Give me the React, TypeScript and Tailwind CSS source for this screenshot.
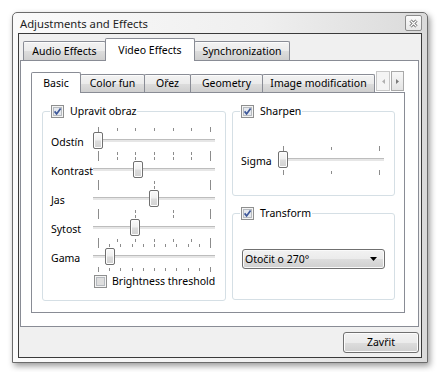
import React from "react";

const tabBase =
  "flex items-center justify-center whitespace-nowrap border-t border-l border-r border-[#898c95] rounded-t-[2px]";
const tabIdle =
  "bg-[linear-gradient(to_bottom,#f3f3f3_0%,#ebebeb_50%,#dddddd_51%,#cfcfcf_100%)] shadow-[inset_0_1px_0_#fcfcfc]";

function CheckBox({ checked }: { checked: boolean }) {
  return (
    <svg width="13" height="13" viewBox="0 0 13 13" className="block shrink-0">
      <rect x="0.5" y="0.5" width="12" height="12" fill="#f4f4f4" stroke="#8e8f8f" />
      <rect x="2.5" y="2.5" width="8" height="8" fill={checked ? "#e6e9ee" : "#dedede"} stroke="#b7bbc0" />
      {checked && (
        <path d="M3.6 6.4 L5.6 8.9 L9.6 3.4" fill="none" stroke="#3d5799" strokeWidth="1.7" />
      )}
    </svg>
  );
}

function Ticks({ count, width }: { count: number; width: number }) {
  const span = width - 10;
  return (
    <svg width={width} height="5" className="block">
      {Array.from({ length: count }).map((_, i) => {
        const x = Math.round(5 + (span * i) / (count - 1)) + 0.5;
        const end = i === 0 || i === count - 1;
        return (
          <line key={i} x1={x} x2={x} y1={end ? 0 : 1} y2={end ? 5 : 4} stroke="#8c8c8c" />
        );
      })}
    </svg>
  );
}

function Slider({
  width,
  widthClass,
  value,
  above,
  below,
}: {
  width: number;
  widthClass: string;
  value: number;
  above: number;
  below: number;
}) {
  const left = Math.round(value * (width - 10));
  return (
    <div className={`flex flex-col h-[29px] shrink-0 ${widthClass}`}>
      <Ticks count={above} width={width} />
      <div className="relative h-[17px]">
        <div className="mt-[7px] h-[3px] bg-[#e6e6e6] border-t border-[#bdbdbd]" />
        <div
          className="absolute top-0 w-[10px] h-[17px] rounded-[2px] border border-[#707070] bg-[linear-gradient(to_bottom,#fbfbfb_0%,#f0f0f0_45%,#dcdcdc_55%,#d2d2d2_100%)] shadow-[inset_0_0_0_1px_#fdfdfd]"
          style={{ left }}
        />
      </div>
      <div className="h-[2px]" />
      <Ticks count={below} width={width} />
    </div>
  );
}

export default function App() {
  const rows = [
    { label: "Odstín", value: 0, above: 7, below: 7 },
    { label: "Kontrast", value: 0.36, above: 7, below: 3 },
    { label: "Jas", value: 0.5, above: 3, below: 4 },
    { label: "Sytost", value: 0.33, above: 4, below: 7 },
    { label: "Gama", value: 0.11, above: 11, below: 11 },
  ];

  const innerTabs = [
    { name: "Color fun", w: "w-[65px]" },
    { name: "Ořez", w: "w-[47px]" },
    { name: "Geometry", w: "w-[73px]" },
    { name: "Image modification", w: "w-[113px]" },
  ];

  return (
    <div className="w-[440px] h-[372px] bg-white pt-[12px] pl-[12px] font-['Noto_Sans',sans-serif] text-[10.5px] leading-[13px] text-black">
      <div className="w-[416px] h-[351px] flex flex-col border border-[#6b6b6b] rounded-t-[5px] px-[5px] pb-[4px] bg-[linear-gradient(to_right,#fafafa_0%,#efefef_60%,#dadada_100%)] shadow-[2px_3px_6px_rgba(0,0,0,0.4)]">
        {/* Title bar */}
        <div className="h-[20px] flex items-center justify-between">
          <span className="pl-[2px] text-[11.25px] text-[#1e1e1e]">Adjustments and Effects</span>
          <div className="w-[17px] h-[16px] flex items-center justify-center border border-[#8c8c8c] rounded-[2px] bg-[linear-gradient(to_bottom,#fbfbfb,#e8e8e8)]">
            <svg width="9" height="9" viewBox="0 0 9 9">
              <path d="M1.5 1.5 L7.5 7.5 M7.5 1.5 L1.5 7.5" stroke="#6a6a6a" strokeWidth="3" />
              <path d="M1.5 1.5 L7.5 7.5 M7.5 1.5 L1.5 7.5" stroke="#ffffff" strokeWidth="1.2" />
            </svg>
          </div>
        </div>

        {/* Client area */}
        <div className="flex-1 flex flex-col border border-[#3a3a3a] bg-[#f0f0f0] pt-[4px] pb-[4px]">
          <div className="flex items-end h-[22px] ml-[4px]">
            <div className={`${tabBase} ${tabIdle} w-[83px] h-[19px]`}>Audio Effects</div>
            <div className={`${tabBase} relative z-10 -ml-px -mb-px w-[90px] h-[23px] bg-white`}>
              Video Effects
            </div>
            <div className={`${tabBase} ${tabIdle} -ml-px w-[96px] h-[19px]`}>Synchronization</div>
          </div>

          <div className="ml-[1px] w-[399px] h-[267px] border border-[#898c95] bg-white pt-[11px] pl-[10px]">
            <div className="flex items-end h-[20px]">
              <div className={`${tabBase} relative z-10 -mb-px w-[50px] h-[21px] bg-white`}>Basic</div>
              {innerTabs.map((t) => (
                <div key={t.name} className={`${tabBase} ${tabIdle} -ml-px ${t.w} h-[18px]`}>
                  {t.name}
                </div>
              ))}
              <div className="flex gap-[1px] ml-[1px] mb-[1px]">
                <div className="w-[14px] h-[20px] flex items-center justify-center border border-[#c8c8c8] bg-[#f4f4f4]">
                  <svg width="3" height="5" viewBox="0 0 3 5">
                    <path d="M3 0 L0 2.5 L3 5 Z" fill="#b0b0b0" />
                  </svg>
                </div>
                <div className="w-[13px] h-[20px] flex items-center justify-center border border-[#a9a9a9] bg-[linear-gradient(to_bottom,#f7f7f7,#e4e4e4)]">
                  <svg width="3" height="5" viewBox="0 0 3 5">
                    <path d="M0 0 L3 2.5 L0 5 Z" fill="#7a7a7a" />
                  </svg>
                </div>
              </div>
            </div>

            <div className="w-[374px] h-[221px] border border-[#898c95] bg-white flex gap-[6px] pt-[12px] pl-[10px]">
              {/* Upravit obraz */}
              <fieldset className="w-[184px] self-start border border-[#d5dfe5] rounded-[3px]">
                <legend className="ml-[7px] px-[1px]">
                  <div className="flex items-center gap-[6px] h-[13px]">
                    <CheckBox checked />
                    <span>Upravit obraz</span>
                  </div>
                </legend>
                <div className="pl-[8px] pt-[9px] pb-[12px]">
                  {rows.map((r) => (
                    <div key={r.label} className="flex h-[29px]">
                      <div className="w-[42px] flex items-center pt-[2px] whitespace-nowrap">{r.label}</div>
                      <Slider
                        width={122}
                        widthClass="w-[122px]"
                        value={r.value}
                        above={r.above}
                        below={r.below}
                      />
                    </div>
                  ))}
                  <div className="flex items-center gap-[5px] mt-[3px] ml-[43px]">
                    <CheckBox checked={false} />
                    <span className="whitespace-nowrap">Brightness threshold</span>
                  </div>
                </div>
              </fieldset>

              <div className="w-[163px] flex flex-col">
                {/* Sharpen */}
                <fieldset className="border border-[#d5dfe5] rounded-[3px]">
                  <legend className="ml-[7px] px-[1px]">
                    <div className="flex items-center gap-[6px] h-[13px]">
                      <CheckBox checked />
                      <span>Sharpen</span>
                    </div>
                  </legend>
                  <div className="flex pl-[8px] pt-[28px] pb-[20px]">
                    <div className="w-[37px] flex items-center pt-[2px]">Sigma</div>
                    <Slider width={106} widthClass="w-[106px]" value={0} above={3} below={3} />
                  </div>
                </fieldset>

                {/* Transform */}
                <fieldset className="mt-[11px] border border-[#d5dfe5] rounded-[3px]">
                  <legend className="ml-[7px] px-[1px]">
                    <div className="flex items-center gap-[6px] h-[13px]">
                      <CheckBox checked />
                      <span>Transform</span>
                    </div>
                  </legend>
                  <div className="pl-[9px] pt-[29px] pb-[30px]">
                    <div className="w-[143px] h-[20px] flex items-center justify-between pl-[2px] pr-[7px] border border-[#707070] rounded-[3px] bg-[linear-gradient(to_bottom,#f2f2f2_0%,#ebebeb_50%,#dddddd_51%,#cfcfcf_100%)] shadow-[inset_0_0_0_1px_#fafafa]">
                      <span className="whitespace-nowrap">Otočit o 270°</span>
                      <svg width="7" height="4" viewBox="0 0 7 4">
                        <path d="M0 0 H7 L3.5 4 Z" fill="#000" />
                      </svg>
                    </div>
                  </div>
                </fieldset>
              </div>
            </div>
          </div>

          <button className="self-end mr-[2px] mt-[5px] w-[76px] h-[21px] border border-[#707070] rounded-[3px] bg-[linear-gradient(to_bottom,#f2f2f2_0%,#ebebeb_50%,#dddddd_51%,#cfcfcf_100%)] shadow-[inset_0_0_0_1px_#fcfcfc] text-[10.5px] leading-[13px]">
            Zavřit
          </button>
        </div>
      </div>
    </div>
  );
}
